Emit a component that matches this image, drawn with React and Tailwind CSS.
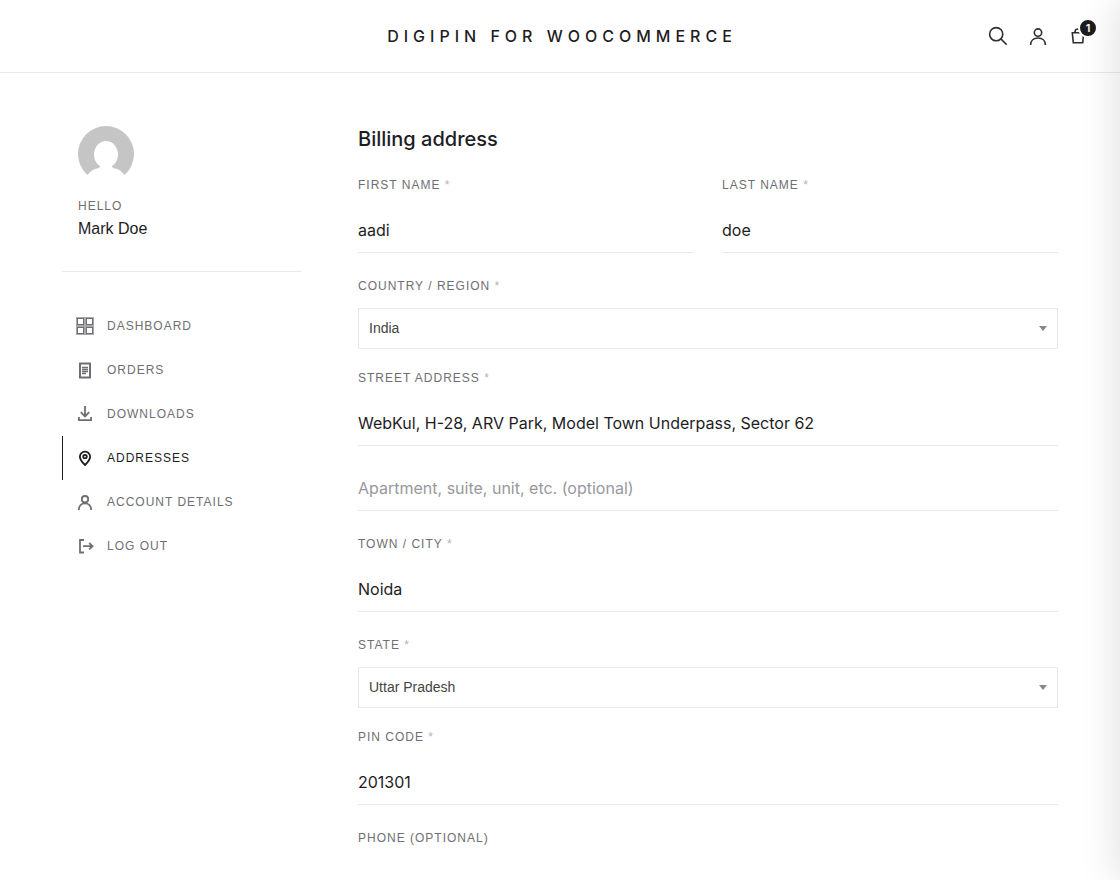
import { useState } from 'react';

const stroke = { fill: 'none', stroke: 'currentColor' };

const navItems = [
  {
    label: 'Dashboard',
    icon: (
      <svg viewBox="0 0 20 20" className="h-5 w-5" shapeRendering="crispEdges">
        <rect x="1" y="1" width="18" height="18" fill="#a8a8ab" />
        {[[2, 2], [11, 2], [2, 11], [11, 11]].map(([x, y]) => (
          <g key={`${x}-${y}`}>
            <rect x={x} y={y} width="7" height="7" fill="currentColor" />
            <rect x={x + 1} y={y + 1} width="5" height="5" fill="#fff" />
          </g>
        ))}
      </svg>
    ),
  },
  {
    label: 'Orders',
    icon: (
      <svg viewBox="0 0 20 20" className="h-5 w-5" {...stroke}>
        <rect x="5" y="3.5" width="10" height="14" strokeWidth="2" />
        <path strokeWidth="1.4" d="M7 7.5h6M7 9.5h6M7 11.5h6M7 13.5h4" />
      </svg>
    ),
  },
  {
    label: 'Downloads',
    icon: (
      <svg viewBox="0 0 20 20" className="h-5 w-5" {...stroke} strokeWidth="1.8">
        <path d="M10 2v10M5.8 8.2L10 12.4l4.2-4.2M3.9 13v3.1h12.2V13" />
      </svg>
    ),
  },
  {
    label: 'Addresses',
    icon: (
      <svg viewBox="0 0 20 20" className="h-5 w-5" {...stroke} strokeWidth="1.8">
        <path d="M10 17C7 14 4.9 11.3 4.9 8.7a5.1 5.1 0 0 1 10.2 0c0 2.6-2.1 5.3-5.1 8.3z" />
        <circle cx="10" cy="8.6" r="1.8" />
      </svg>
    ),
  },
  {
    label: 'Account details',
    icon: (
      <svg viewBox="0 0 20 20" className="h-5 w-5" {...stroke} strokeWidth="1.8">
        <circle cx="10" cy="7.2" r="3.2" />
        <path d="M3.8 18c0-4 2.6-6.6 6.2-6.6s6.2 2.6 6.2 6.6" />
      </svg>
    ),
  },
  {
    label: 'Log out',
    icon: (
      <svg viewBox="0 0 20 20" className="h-5 w-5" {...stroke} strokeWidth="1.8">
        <path d="M9 4H5v12.5h4M8 10.2h10M14.2 7l3.3 3.2-3.3 3.2" />
      </svg>
    ),
  },
];

function FieldLabel({ htmlFor, required, children }) {
  return (
    <label htmlFor={htmlFor} className="block text-xs leading-[18px] tracking-[1px] uppercase text-[#6e6e73]">
      {children}
      {required && <span className="text-[#b4b4b8]"> *</span>}
    </label>
  );
}

function TextInput({ className = '', ...props }) {
  return (
    <input
      type="text"
      className={`block h-[45px] w-full border-b border-[#e8e8e8] bg-transparent font-[Inter,sans-serif] text-base text-[#1d1d1f] outline-none placeholder:text-[#98989d] focus:border-[#1d1d1f] ${className}`}
      {...props}
    />
  );
}

function TextField({ id, label, required = true, value }) {
  return (
    <div>
      <FieldLabel htmlFor={id} required={required}>{label}</FieldLabel>
      <TextInput id={id} name={id} defaultValue={value} className="mt-[14px]" />
    </div>
  );
}

function SelectField({ id, label, options }) {
  const [value, setValue] = useState(options[0]);

  return (
    <div>
      <FieldLabel htmlFor={id} required>{label}</FieldLabel>
      <div className="relative mt-[13px]">
        <select
          id={id}
          name={id}
          value={value}
          onChange={(e) => setValue(e.target.value)}
          className="block h-[41px] w-full appearance-none border border-[#e8e8e8] bg-white px-[10px] pb-0.5 text-sm text-[#444] outline-none"
        >
          {options.map((option) => (
            <option key={option}>{option}</option>
          ))}
        </select>
        <svg viewBox="0 0 8 5" className="pointer-events-none absolute inset-y-0 right-[11px] my-auto h-[5px] w-2 text-[#888]">
          <path fill="currentColor" d="M0 0h8L4 5z" />
        </svg>
      </div>
    </div>
  );
}

function Header() {
  return (
    <header className="grid h-[73px] grid-cols-[1fr_auto_1fr] items-center border-b border-[#e8e8e8] pr-[30px] pl-[34px] text-[#1d1d1f]">
      <a href="#home" className="col-start-2 font-[Inter,sans-serif] text-base font-medium tracking-[5px] uppercase">
        DigiPin for WooCommerce
      </a>
      <div className="flex items-center gap-4 justify-self-end text-[#2f2f31]">
        <button type="button" aria-label="Search">
          <svg viewBox="0 0 24 24" className="h-6 w-6" {...stroke} strokeWidth="1.6">
            <circle cx="10.2" cy="10.2" r="6.6" />
            <path d="M14.9 14.9l5.8 5.8" />
          </svg>
        </button>
        <a href="#account" aria-label="My account">
          <svg viewBox="0 0 24 24" className="h-6 w-6" {...stroke} strokeWidth="1.6">
            <circle cx="12" cy="8.6" r="3.7" />
            <path d="M4.6 21c0-4.4 3.2-7 7.4-7s7.4 2.6 7.4 7" />
          </svg>
        </a>
        <button type="button" aria-label="Open cart" className="relative">
          <svg viewBox="0 0 24 24" className="h-6 w-6" {...stroke} strokeWidth="1.6">
            <path d="M6.3 8.8h11.4l-1 10H7.3zM9 9V8a3 3 0 0 1 6 0v1" />
          </svg>
          <span className="absolute -top-1.5 -right-2 flex h-5 w-5 items-center justify-center rounded-full border-2 border-white bg-[#1d1d1f] font-[Inter,sans-serif] text-[11px] font-semibold text-white">
            1
          </span>
        </button>
      </div>
    </header>
  );
}

function Sidebar() {
  return (
    <aside className="w-60 shrink-0">
      <div className="border-b border-[#e8e8e8] px-4 pb-[30px]">
        <svg viewBox="0 0 56 56" className="h-14 w-14" role="img" aria-label="Mark Doe">
          <circle cx="28" cy="28" r="28" fill="#c5c5c5" />
          <ellipse cx="28" cy="28.5" rx="12" ry="13.5" fill="#fff" />
          <path fill="#fff" d="M23 38c0 3-2 4-5 4.8-3.5.9-6 2.7-8.500 6.200L0 57h56l-9.500-8c-2.500-3.500-5-5.300-8.500-6.200-3-.8-5-1.800-5-4.800z" />
        </svg>
        <p className="mt-[15px] text-xs leading-[18px] tracking-[1px] uppercase text-[#6e6e73]">Hello</p>
        <p className="mt-0.5 text-base text-[#1d1d1f]">Mark Doe</p>
      </div>
      <nav className="mt-8" aria-label="Account pages">
        {navItems.map(({ label, icon }) => (
          <a
            key={label}
            href="#account"
            aria-current={label === 'Addresses' ? 'page' : undefined}
            className="flex h-11 items-center gap-3 border-l border-transparent pl-3 text-xs tracking-[1px] uppercase text-[#6e6e73] aria-[current=page]:border-[#1d1d1f] aria-[current=page]:text-[#1d1d1f]"
          >
            {icon}
            {label}
          </a>
        ))}
      </nav>
    </aside>
  );
}

function BillingForm() {
  return (
    <form className="min-w-0 flex-1" onSubmit={(e) => e.preventDefault()}>
      <h1 className="font-[Inter,sans-serif] text-xl leading-[26px] font-medium text-[#1d1d1f]">Billing address</h1>
      <div className="mt-6 space-y-6">
        <div className="grid grid-cols-2 gap-7">
          <TextField id="first_name" label="First name" value="aadi" />
          <TextField id="last_name" label="Last name" value="doe" />
        </div>
        <div className="space-y-5">
          <SelectField id="country" label="Country / Region" options={['India']} />
          <TextField id="street" label="Street address" value="WebKul, H-28, ARV Park, Model Town Underpass, Sector 62" />
          <TextInput id="street_2" aria-label="Apartment, suite, unit, etc." placeholder="Apartment, suite, unit, etc. (optional)" />
        </div>
        <TextField id="city" label="Town / City" value="Noida" />
        <div className="space-y-5">
          <SelectField id="state" label="State" options={['Uttar Pradesh']} />
          <TextField id="pin_code" label="PIN Code" value="201301" />
        </div>
        <TextField id="phone" label="Phone (optional)" required={false} />
      </div>
    </form>
  );
}

function App() {
  return (
    <div className="min-h-screen bg-white font-['Liberation_Sans',Arial,sans-serif]">
      <Header />
      <main className="flex gap-14 px-[62px] pt-[53px] pb-12">
        <Sidebar />
        <BillingForm />
      </main>
      {/* closed cart drawer, its shadow reaches into the page */}
      <div className="pointer-events-none fixed inset-y-0 left-full w-80 bg-white shadow-[0_0_40px_rgba(0,0,0,0.14)]" />
    </div>
  );
}

export default App;
